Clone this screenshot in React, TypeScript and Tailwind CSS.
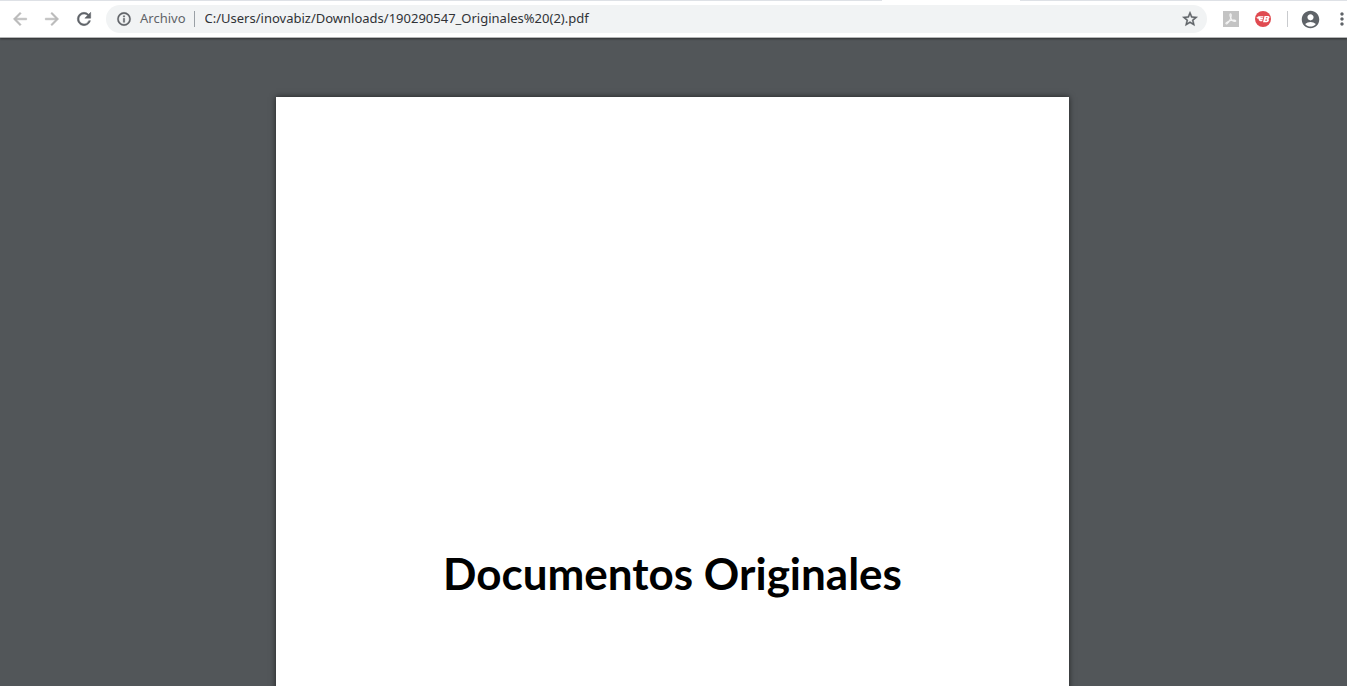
import React from "react";
import { MdAccountCircle, MdMoreVert } from "react-icons/md";

const glyphs = {
  back: "M20 11H7.830l5.590-5.590L12 4l-8 8 8 8 1.410-1.410L7.830 13H20v-2z",
  forward: "M12 4l-1.410 1.410L16.170 11H4v2h12.170l-5.580 5.590L12 20l8-8z",
  reload:
    "M17.650 6.350A7.958 7.958 0 0 0 12 4a8 8 0 1 0 7.730 10h-2.080A5.990 5.990 0 0 1 12 18a6 6 0 1 1 0-12c1.660 0 3.140.69 4.220 1.780L13 11h7V4l-2.350 2.350z",
  info: "M11 7h2v2h-2V7zm0 4h2v6h-2v-6zm1-9a10 10 0 1 0 0 20 10 10 0 0 0 0-20zm0 18a8 8 0 1 1 0-16 8 8 0 0 1 0 16z",
  star: "M22 9.240l-7.190-.62L12 2 9.190 8.630 2 9.240l5.460 4.730L5.820 21 12 17.270 18.180 21l-1.630-7.030L22 9.240zM12 15.400l-3.760 2.270 1-4.280-3.320-2.880 4.380-.38L12 6.100l1.710 4.040 4.380.38-3.320 2.880 1 4.280L12 15.400z",
};

function Glyph({ name, className }: { name: keyof typeof glyphs; className: string }) {
  return (
    <svg viewBox="0 0 24 24" className={className} fill="currentColor" stroke="currentColor" strokeWidth="0.6" aria-hidden="true">
      <path d={glyphs[name]} />
    </svg>
  );
}

function PdfExtensionIcon() {
  return (
    <svg viewBox="0 0 16 16" className="size-4" aria-hidden="true">
      <rect width="16" height="16" fill="#c3c3c3" />
      <path
        d="M7.300 2.900C8.500 2.700 8.400 5 7.900 6.700 7.200 9 5.400 11.800 4 12.700c-1 .6-1.600-.2-.7-1.100 1.500-1.400 5.200-2.600 7.900-2.500 1.700.1 2.100 1.200.9 1.400-1.500.2-3.500-1.600-4.400-3.500C7 5.400 6.500 3.100 7.300 2.900z"
        fill="none"
        stroke="#f4f4f4"
        strokeWidth="1.100"
      />
    </svg>
  );
}

function RedExtensionIcon() {
  return (
    <svg viewBox="0 0 16 16" className="size-4" aria-hidden="true">
      <circle cx="8" cy="8" r="8" fill="#e04a50" />
      <path d="M1 6.800 3.600 5.300h4.900L8.200 6.500H5.600l-.2.600h2.600l-.3 1.300H5.400l-.1.500h2.200l-.3 1.300H5.100L3.600 9l.3-1.200H2.200l.3-1z" fill="#fff" />
      <path
        fillRule="evenodd"
        d="M9.500 4.900h3.500c1.500 0 2 1.300 1.200 2.400l-.7.700c1 .9.300 3.200-1.700 3.200H8zM11 6.300l-.2 1h1.200c.7 0 .8-1 .1-1zM10.500 8.600l-.3 1.200h1.300c.7 0 .9-1.200.1-1.200z"
        fill="#fff"
      />
    </svg>
  );
}

const iconButton = "flex size-8 shrink-0 items-center justify-center";

function Toolbar() {
  return (
    <header className="relative z-10 shrink-0 border-b border-[#b4b5b6] bg-white shadow-[0_1px_2px_rgba(0,0,0,0.45)]">
      <div className="flex h-px">
        <span className="w-[882px] bg-[#dee1e6]" />
        <span className="w-[138px]" />
        <span className="flex-1 bg-[#dee1e6]" />
      </div>
      <div className="flex h-9 items-center overflow-hidden pl-1 text-[#5f6368]">
        <button type="button" aria-label="Atrás" className={`${iconButton} text-[#bababa]`}>
          <Glyph name="back" className="size-5" />
        </button>
        <button type="button" aria-label="Adelante" className={`${iconButton} text-[#bababa]`}>
          <Glyph name="forward" className="size-5" />
        </button>
        <button type="button" aria-label="Volver a cargar" className={iconButton}>
          <Glyph name="reload" className="size-5" />
        </button>
        <div className="ml-1.5 flex h-7 min-w-0 flex-1 items-center rounded-full bg-[#f1f3f4] pr-2 pl-2.5 font-['Noto_Sans',sans-serif] text-[13px]">
          <Glyph name="info" className="size-4 shrink-0" />
          <label htmlFor="address" className="ml-2">
            Archivo
          </label>
          <span className="ml-2 h-4 w-px bg-[#9aa0a6]" />
          <input
            id="address"
            type="text"
            defaultValue="C:/Users/inovabiz/Downloads/190290547_Originales%20(2).pdf"
            className="ml-2.5 min-w-0 flex-1 bg-transparent text-[#303236] outline-none"
          />
          <button type="button" aria-label="Añadir a marcadores" className="shrink-0">
            <Glyph name="star" className="size-[18px]" />
          </button>
        </div>
        <button type="button" aria-label="Extensión PDF" className={`${iconButton} ml-2`}>
          <PdfExtensionIcon />
        </button>
        <button type="button" aria-label="Extensión" className={iconButton}>
          <RedExtensionIcon />
        </button>
        <span className="mr-1.5 ml-2 h-4 w-px bg-[#c9cbce]" />
        <button type="button" aria-label="Perfil" className={iconButton}>
          <MdAccountCircle className="size-[21px]" />
        </button>
        <button type="button" aria-label="Más opciones" className="-mr-[5px] ml-1.5 flex h-8 shrink-0 items-center">
          <MdMoreVert className="size-5" />
        </button>
      </div>
    </header>
  );
}

export default function App() {
  return (
    <div className="flex h-screen flex-col overflow-hidden bg-[#525659]">
      <Toolbar />
      <main className="flex min-h-0 flex-1 justify-center overflow-hidden px-4 pt-[59px]">
        <article className="mr-0.5 h-[1123px] w-full max-w-[793px] bg-white pt-[446px] text-center shadow-[0_0_6px_rgba(0,0,0,0.6)]">
          <h1 className="font-['Lato',sans-serif] text-[44px] leading-[60px] font-bold text-black">
            Documentos Originales
          </h1>
        </article>
      </main>
    </div>
  );
}
